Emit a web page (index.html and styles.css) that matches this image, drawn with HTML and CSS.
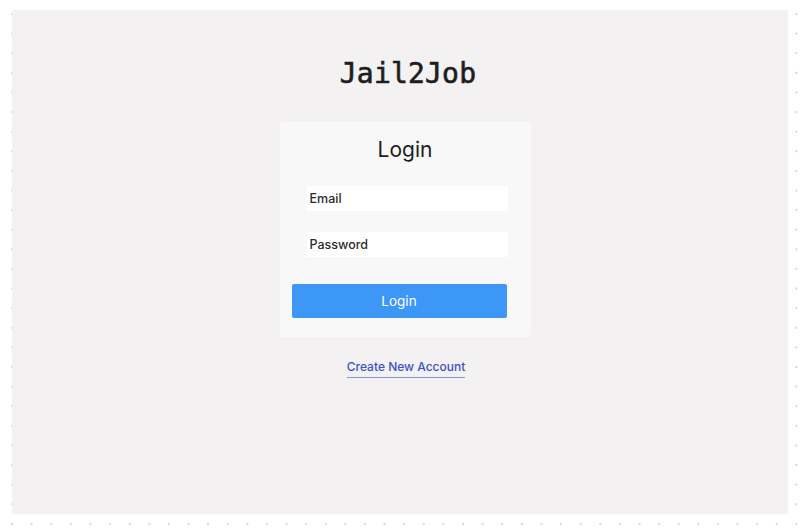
FILE: index.html
```html
<!DOCTYPE html>
<html>
<head>
<meta charset="utf-8">
<link rel="stylesheet" href="styles.css">
</head>
<body>
<main class="panel">
  <h1 class="brand">Jail2Job</h1>
  <section class="card">
    <h2 class="card-title">Login</h2>
    <div class="field"><input class="input" type="text" placeholder="Email"></div>
    <div class="field"><input class="input" type="password" placeholder="Password"></div>
    <button class="btn">Login</button>
  </section>
  <a class="link" href="#">Create New Account</a>
</main>
</body>
</html>
```
FILE: styles.css
```css
html, body {
  margin: 0;
  padding: 0;
}
body {
  width: 806px;
  height: 531px;
  overflow: hidden;
  background-color: #ffffff;
  background-image: radial-gradient(circle, #d6d6d6 0.9px, transparent 1.3px);
  background-size: 19.62px 19.62px;
  background-position: 2.2px 4.2px;
  font-family: Inter, "Noto Sans", sans-serif;
}
.panel {
  margin: 10px 0 0 12px;
  width: 776px;
  height: 504px;
  background: #f3f1f2;
  display: flex;
  flex-direction: column;
  align-items: center;
  padding-left: 12px;
  box-sizing: border-box;
}
.brand {
  margin: 47px 0 0 0;
  padding-left: 4px;
  font-family: "DejaVu Sans Mono", "Liberation Mono", monospace;
  font-weight: 400;
  -webkit-text-stroke: 0.6px #1d1d1d;
  font-size: 28px;
  line-height: 34px;
  color: #1d1d1d;
  letter-spacing: 0.2px;
}
.card {
  margin-top: 31px;
  width: 251px;
  height: 215px;
  background: #f9f8f8;
  border-radius: 3px;
  box-sizing: border-box;
  padding: 14px 24px 0 12px;
  display: flex;
  flex-direction: column;
  position: relative;
  left: -1px;
}
.card-title {
  margin: 0;
  text-align: center;
  font-size: 21px;
  font-weight: 400;
  line-height: 28px;
  color: #1c1c1c;
  padding-left: 12px;
}
.field {
  padding-left: 15px;
  margin-top: 22px;
}
.field + .field {
  margin-top: 21px;
}
.input {
  display: block;
  width: 201px;
  height: 25px;
  box-sizing: border-box;
  border: none;
  background: #ffffff;
  padding: 0 3px;
  font-family: Inter, "Noto Sans", sans-serif;
  font-size: 12.5px;
  font-weight: 500;
  color: #222;
  outline: none;
}
.input::placeholder {
  color: #2a2a2a;
  opacity: 1;
}
.btn {
  margin-top: 27px;
  width: 215px;
  height: 34px;
  border: none;
  border-radius: 2px;
  background: #3d97f6;
  color: #ffffff;
  font-family: Inter, "Noto Sans", sans-serif;
  font-size: 13.5px;
  padding: 0;
}
.link {
  margin-top: 22px;
  font-size: 12px;
  font-weight: 500;
  color: #3a51cc;
  text-decoration: none;
  border-bottom: 1px solid #8893d8;
  padding-bottom: 2px;
  line-height: 16px;
}
```
